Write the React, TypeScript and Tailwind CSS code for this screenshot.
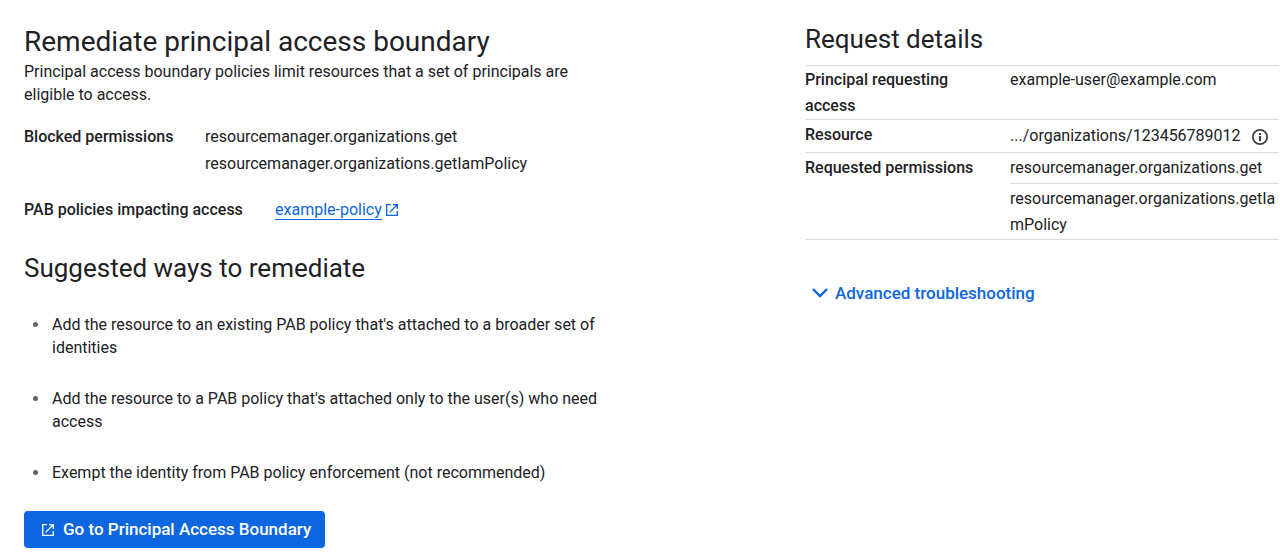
import React, { useState } from 'react';

const blockedPermissions = [
  'resourcemanager.organizations.get',
  'resourcemanager.organizations.getIamPolicy',
];

const suggestions = [
  "Add the resource to an existing PAB policy that's attached to a broader set of identities",
  "Add the resource to a PAB policy that's attached only to the user(s) who need access",
  'Exempt the identity from PAB policy enforcement (not recommended)',
];

const ExternalLinkIcon: React.FC = () => (
  <svg width="12" height="12" viewBox="0 0 12 12" fill="none" stroke="currentColor" strokeWidth="1.3" aria-hidden="true">
    <path d="M5 0.7H0.7V11.3H11.3V7" />
    <path d="M7 0.7H11.3V5M11 1L3.6 8.4" />
  </svg>
);

const InfoIcon: React.FC = () => (
  <svg width="16" height="16" viewBox="0 0 16 16" fill="none" stroke="currentColor" aria-hidden="true">
    <circle cx="8" cy="8" r="7.1" strokeWidth="1.8" />
    <path d="M8 7V12M8 4V6" strokeWidth="2.2" />
  </svg>
);

const ChevronIcon: React.FC = () => (
  <svg width="16" height="10" viewBox="0 0 16 10" fill="none" stroke="currentColor" strokeWidth="2.4" aria-hidden="true">
    <path d="M1 1L8 8L15 1" />
  </svg>
);

const RemediatePanel: React.FC = () => (
  <section className="pl-6 pt-6">
    <h1 className="font-['Google_Sans','Roboto',sans-serif] text-[28px] leading-9">Remediate principal access boundary</h1>
    <p className="max-w-[580px] leading-[23px]">
      Principal access boundary policies limit resources that a set of principals are eligible to access.
    </p>

    <dl>
      <div className="mt-[17px] flex leading-[27px]">
        <dt className="w-[181px] shrink-0 font-medium">Blocked permissions</dt>
        <dd>
          {blockedPermissions.map((name) => (
            <div key={name}>{name}</div>
          ))}
        </dd>
      </div>
      <div className="mt-[19px] flex items-center leading-[27px]">
        <dt className="w-[251px] shrink-0 font-medium">PAB policies impacting access</dt>
        <dd>
          <a href="#policy" className="flex items-center gap-1 text-[#0b66e0]">
            <span className="border-b border-current leading-[19px]">example-policy</span>
            <ExternalLinkIcon />
          </a>
        </dd>
      </div>
    </dl>

    <h2 className="mt-[27px] font-['Google_Sans','Roboto',sans-serif] text-[26px] leading-9">Suggested ways to remediate</h2>
    <ul className="mt-[27px] max-w-[580px] space-y-7 leading-[23px]">
      {suggestions.map((text) => (
        <li key={text} className="flex">
          <span className="ml-[9px] mr-[14px] mt-[9px] size-[5px] shrink-0 rounded-full bg-[#5f6368]" />
          <span>{text}</span>
        </li>
      ))}
    </ul>

    <button type="button" className="mt-[27px] flex h-[37px] items-center gap-[9px] rounded bg-[#0b66e0] pl-[18px] pr-[14px] text-[17px] font-medium text-white">
      <ExternalLinkIcon />
      Go to Principal Access Boundary
    </button>
  </section>
);

const RequestPanel: React.FC = () => {
  const [open, setOpen] = useState(false);

  return (
    <section className="pr-px pt-[21px]">
      <h2 className="font-['Google_Sans','Roboto',sans-serif] text-[26px] leading-9">Request details</h2>
      <table className="mt-2 w-full table-fixed border-separate border-spacing-0 text-left leading-[26px]">
        <tbody className="align-top">
          <tr>
            <th scope="row" className="w-[205px] border-t border-[#dadce0] pr-8 pt-px font-medium">Principal requesting access</th>
            <td className="border-t border-[#dadce0] pt-px">example-user@example.com</td>
          </tr>
          <tr>
            <th scope="row" className="border-t border-[#dadce0] pt-0.5 font-medium">Resource</th>
            <td className="border-t border-[#dadce0] py-[3px]">
              <span className="flex items-center gap-[11px]">
                .../organizations/123456789012
                <button type="button" aria-label="Resource info" className="mt-0.5 text-[#3c4043]">
                  <InfoIcon />
                </button>
              </span>
            </td>
          </tr>
          <tr>
            <th scope="rowgroup" rowSpan={2} className="border-y border-[#dadce0] pt-0.5 font-medium">Requested permissions</th>
            <td className="border-t border-[#dadce0] py-0.5">resourcemanager.organizations.get</td>
          </tr>
          <tr>
            <td className="break-all border-y border-[#dadce0] pb-px pt-0.5">resourcemanager.organizations.getIamPolicy</td>
          </tr>
        </tbody>
      </table>

      <button
        type="button"
        aria-expanded={open}
        onClick={() => setOpen(!open)}
        className="mt-10 flex items-center gap-[7px] pl-[7px] text-[17px] font-medium leading-[26px] text-[#0b66e0]"
      >
        <ChevronIcon />
        Advanced troubleshooting
      </button>
    </section>
  );
};

const App: React.FC = () => (
  <main className="grid grid-cols-[minmax(0,1fr)_475px] bg-white font-['Roboto',sans-serif] text-base text-[#202124]">
    <RemediatePanel />
    <RequestPanel />
  </main>
);

export default App;
